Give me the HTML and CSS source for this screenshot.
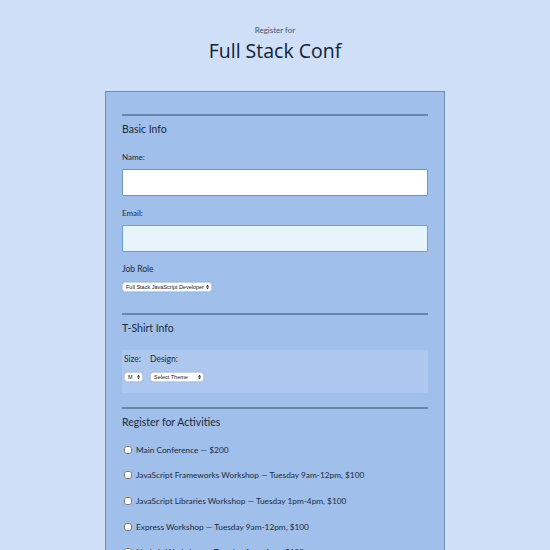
FILE: index.html
```html
<!DOCTYPE html>
<html>
<head>
<meta charset="utf-8">
<link rel="stylesheet" href="styles.css">
</head>
<body>
<header class="header">
  <span class="pre">Register for</span>
  <h1 class="title">Full Stack Conf</h1>
</header>
<form class="form">
  <fieldset class="section">
    <legend class="legend">Basic Info</legend>
    <label class="label" for="name">Name:</label>
    <input class="text" id="name" type="text">
    <label class="label" for="mail">Email:</label>
    <input class="text email" id="mail" type="email">
    <label class="label role" for="title">Job Role</label>
    <span class="sel-wrap role-sel">
      <select class="sel" id="title"><option>Full Stack JavaScript Developer</option></select>
      <svg class="arrows" viewBox="0 0 4 7" width="3" height="6"><path d="M0 3 L2 0.5 L4 3 Z M0 4 L2 6.5 L4 4 Z" fill="#222"/></svg>
    </span>
  </fieldset>
  <fieldset class="section">
    <legend class="legend">T-Shirt Info</legend>
    <div class="shirt">
      <div class="shirt-col">
        <span class="label">Size:</span>
        <span class="sel-wrap size-sel">
          <select class="sel"><option>M</option></select>
          <svg class="arrows" viewBox="0 0 4 7" width="3" height="6"><path d="M0 3 L2 0.5 L4 3 Z M0 4 L2 6.5 L4 4 Z" fill="#222"/></svg>
        </span>
      </div>
      <div class="shirt-col">
        <span class="label">Design:</span>
        <span class="sel-wrap theme-sel">
          <select class="sel"><option>Select Theme</option></select>
          <svg class="arrows" viewBox="0 0 4 7" width="3" height="6"><path d="M0 3 L2 0.5 L4 3 Z M0 4 L2 6.5 L4 4 Z" fill="#222"/></svg>
        </span>
      </div>
    </div>
  </fieldset>
  <fieldset class="section">
    <legend class="legend">Register for Activities</legend>
    <label class="act"><input type="checkbox" class="cb">Main Conference — $200</label>
    <label class="act"><input type="checkbox" class="cb">JavaScript Frameworks Workshop — Tuesday 9am-12pm, $100</label>
    <label class="act"><input type="checkbox" class="cb">JavaScript Libraries Workshop — Tuesday 1pm-4pm, $100</label>
    <label class="act"><input type="checkbox" class="cb">Express Workshop — Tuesday 9am-12pm, $100</label>
    <label class="act"><input type="checkbox" class="cb">Node.js Workshop — Tuesday 1pm-4pm, $100</label>
  </fieldset>
</form>
</body>
</html>
```
FILE: styles.css
```css
* { box-sizing: border-box; }
html, body { margin: 0; padding: 0; }
body {
  background: #cfdff7;
  font-family: Lato, "Noto Sans", sans-serif;
  color: #1c2b3d;
}
.header {
  display: flex;
  flex-direction: column;
  align-items: center;
  padding-top: 24px;
}
.pre {
  font-size: 8px;
  color: #45556a;
  line-height: 12px;
}
.title {
  margin: 2px 0 0;
  font-family: "Open Sans", sans-serif;
  font-size: 19.5px;
  font-weight: 400;
  line-height: 26px;
  color: #0f2238;
}
.form {
  width: 340px;
  margin: 27px auto 0;
  background: #a0bfea;
  border: 1px solid #6d8db5;
  padding: 22px 16px 0;
}
.section {
  border: none;
  border-top: 2px solid #6a86ab;
  margin: 0;
  padding: 0;
  display: flex;
  flex-direction: column;
}
.section + .section { margin-top: 14px; }
.legend {
  float: left;
  width: 100%;
  font-size: 10.5px;
  line-height: 14px;
  padding: 6px 0 0;
  margin-bottom: 15px;
  color: #1c2b3d;
}
.section > .legend + * { clear: both; }
.label {
  font-size: 8px;
  line-height: 12px;
  color: #1c2b3d;
  margin-bottom: 6px;
}
.text {
  width: 100%;
  height: 27px;
  border: 1px solid #6e97bc;
  background: #fff;
  margin: 0 0 11px;
  border-radius: 1px;
}
.email {
  background: #e8f4fb;
  border-color: #6d9ddb;
}
.role { font-size: 8.5px; margin-bottom: 7px; }
.sel-wrap {
  position: relative;
  display: inline-flex;
  align-self: flex-start;
  height: 10px;
}
.sel {
  appearance: none;
  -webkit-appearance: none;
  width: 100%;
  font-family: "Liberation Sans", sans-serif;
  font-size: 5.5px;
  height: 10px;
  line-height: 8px;
  border: 1px solid #c9d3de;
  border-radius: 3px;
  background: #fdfeff;
  color: #222;
  padding: 0 6px 0 3px;
  margin: 0;
  box-shadow: 0 0 1px rgba(60, 80, 110, 0.4);
}
.arrows {
  position: absolute;
  right: 3px;
  top: 2px;
}
.role-sel { width: 90px; margin-bottom: 7px; }
.shirt {
  display: flex;
  gap: 7px;
  background: #adc7ee;
  padding: 3px 2px 9px;
  height: 43px;
}
.shirt-col { display: flex; flex-direction: column; }
.shirt .label { font-size: 8.5px; margin: 0 0 7px; }
.size-sel { width: 19px; }
.theme-sel { width: 54px; }
.act {
  display: flex;
  align-items: center;
  font-size: 8.3px;
  height: 25.6px;
  color: #1c2b3d;
}
.act:first-of-type { margin-top: -7px; }
.cb {
  width: 8px;
  height: 8px;
  margin: 0 4px 0 2px;
}
```
